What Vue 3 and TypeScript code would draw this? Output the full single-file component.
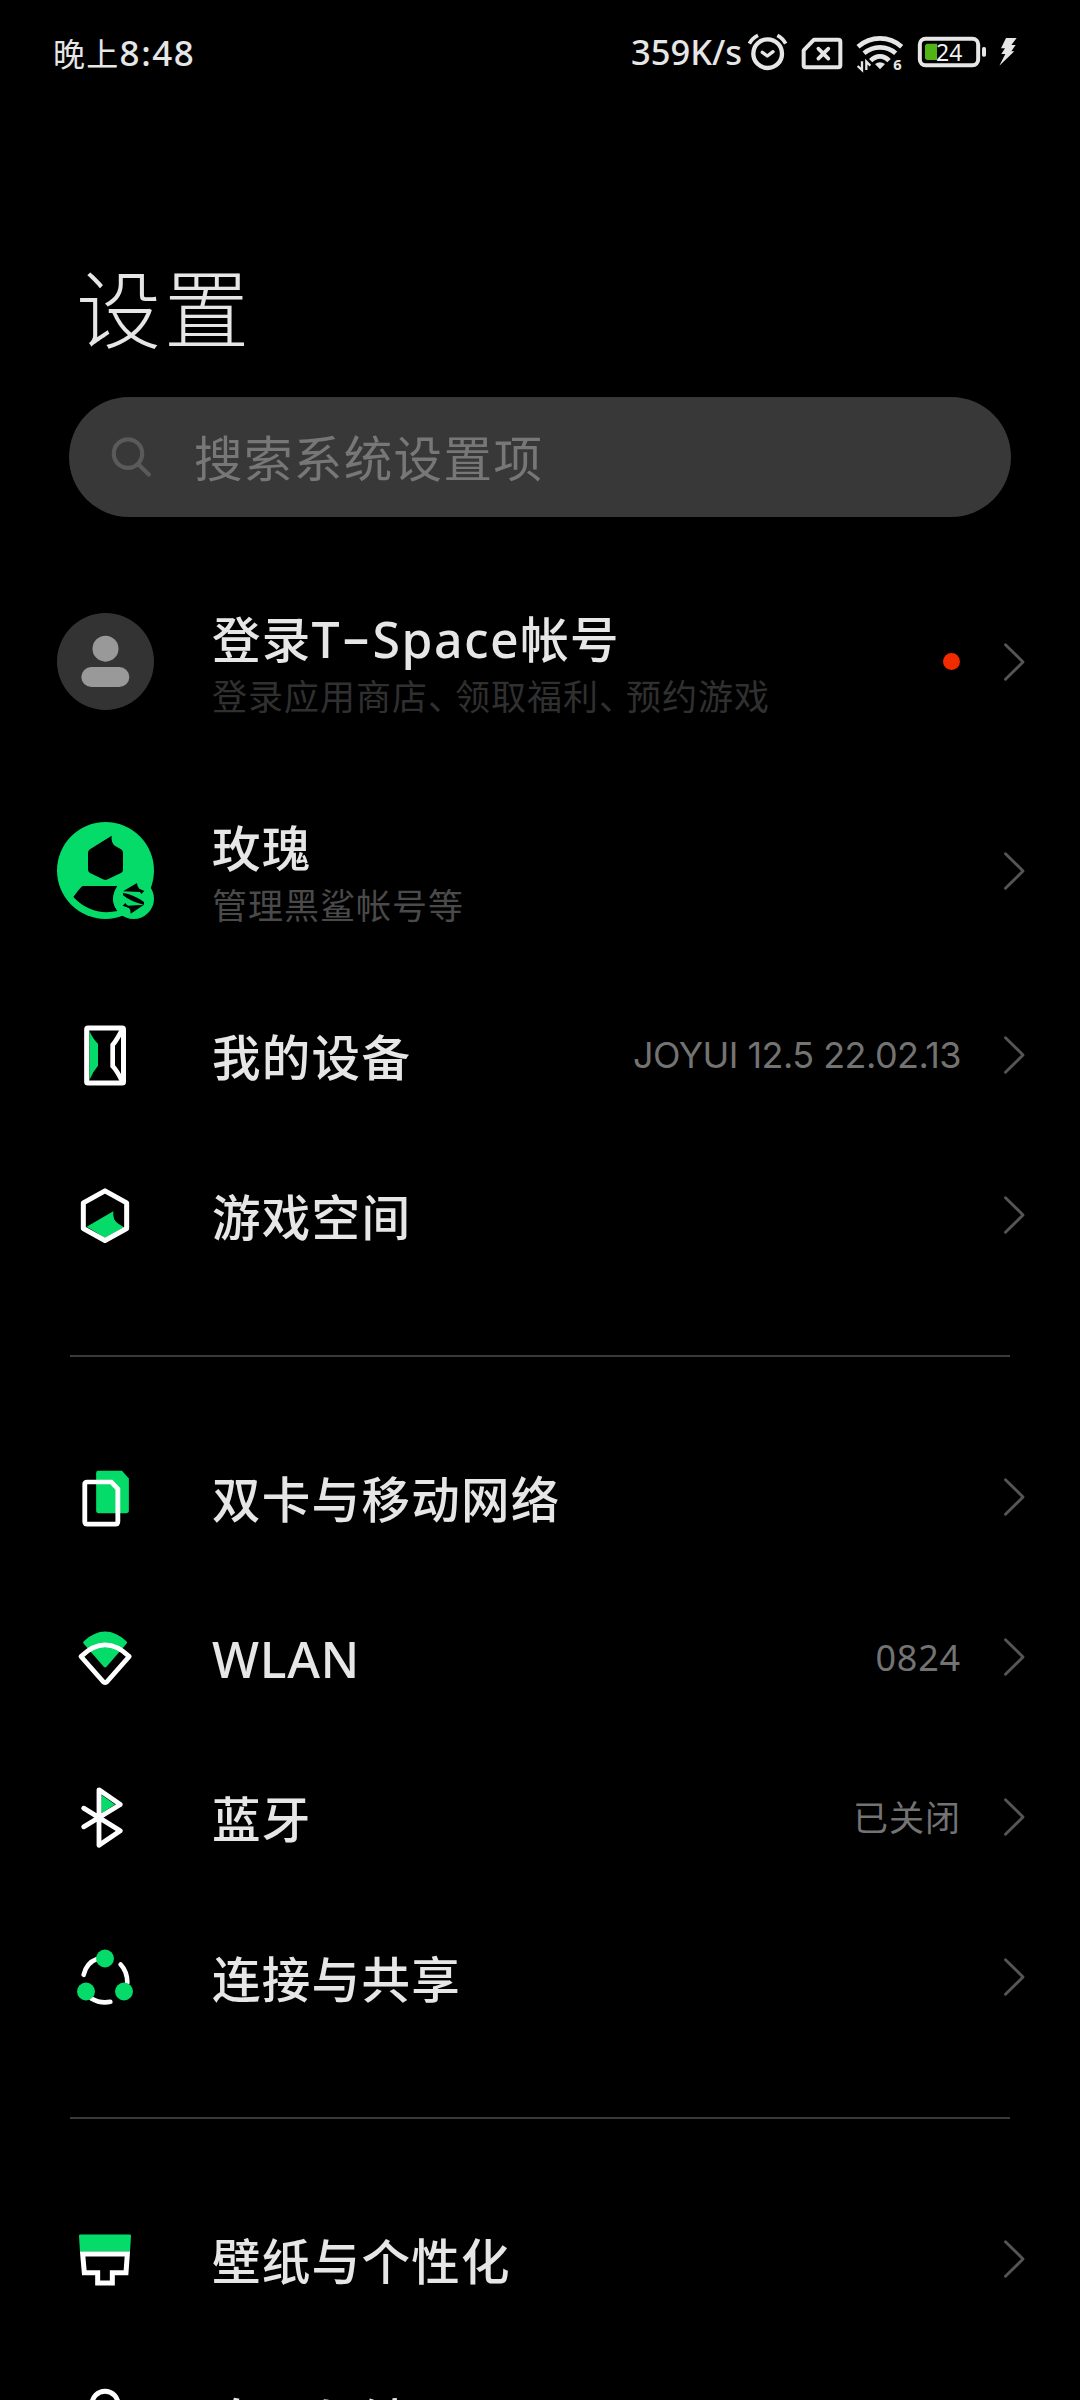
<script setup lang="ts">
interface Run {
  text: string
  kind?: 'latin' | 'latin dash' | 'latin word' | 'comma'
}

interface Row {
  icon: string
  box: string
  title: Run[]
  sub?: Run[]
  faint?: boolean
  value?: string
  valueKind?: 'cjk' | 'version'
  dot?: boolean
}

const sections: Row[][] = [
  [
    {
      icon: 'guest',
      box: '81 69 291 291',
      title: [
        { text: '登录' },
        { text: 'T', kind: 'latin' },
        { text: '-', kind: 'latin dash' },
        { text: 'Space', kind: 'latin word' },
        { text: '帐号' },
      ],
      sub: [
        { text: '登录应用商店' },
        { text: '、', kind: 'comma' },
        { text: '领取福利' },
        { text: '、', kind: 'comma' },
        { text: '预约游戏' },
      ],
      faint: true,
      dot: true,
    },
    { icon: 'account', box: '81 696 291 291', title: [{ text: '玫瑰' }], sub: [{ text: '管理黑鲨帐号等' }] },
    { icon: 'device', box: '21 19.5 291 291', title: [{ text: '我的设备' }], value: 'JOYUI 12.5 22.02.13', valueKind: 'version' },
    { icon: 'game', box: '21 499.5 291 291', title: [{ text: '游戏空间' }] },
  ],
  [
    { icon: 'sim', box: '20.3 25.5 281.7 291', title: [{ text: '双卡与移动网络' }] },
    { icon: 'wlan', box: '20.3 505.5 281.7 291', title: [{ text: 'WLAN', kind: 'latin' }], value: '0824' },
    { icon: 'bluetooth', box: '21 25.5 291 291', title: [{ text: '蓝牙' }], value: '已关闭', valueKind: 'cjk' },
    { icon: 'share', box: '21 505.5 291 291', title: [{ text: '连接与共享' }] },
  ],
  [
    { icon: 'brush', box: '21 361.5 291 291', title: [{ text: '壁纸与个性化' }] },
    { icon: 'lock', box: '21 841.5 291 291', title: [{ text: '息屏与锁屏' }] },
  ],
]
</script>

<template>
  <main class="screen">
    <header class="status">
      <div class="clock">晚上<span class="digits">8:48</span></div>
      <div class="indicators">
        <span class="speed">359K/s</span>
        <svg class="alarm" width="42" height="40" viewBox="441 66 126 120" fill="none" stroke="#e6e6e6" stroke-linecap="round">
          <circle cx="503" cy="131" r="43" stroke-width="13" />
          <path d="M487 127l15 11 17-13" stroke-width="10" stroke-linejoin="round" />
          <path d="M448 101q8-16 26-25M532 76q17 9 25 25" stroke-width="11" stroke-linecap="butt" />
        </svg>
        <svg class="simx" width="44" height="40" viewBox="600 66 132 120" fill="none" stroke="#e6e6e6">
          <path d="M642 89h73q6 0 6 6v71q0 6-6 6h-98q-6 0-6-6v-45z" stroke-width="12" stroke-linejoin="round" />
          <path d="M655 116l30 30M685 116l-30 30" stroke-width="11" stroke-linecap="round" />
        </svg>
        <svg class="wifi" width="50" height="40" viewBox="765 66 150 120" fill="none" stroke="#e6e6e6">
          <path d="M774 110q29-25 66-25t65 25" stroke-width="14" />
          <path d="M792 130q21-18 48-18t47 18" stroke-width="14" />
          <path d="M812 152q13-13 28-13t27 13" stroke-width="14" />
          <path d="M825 162q15-11 30 0l-15 16z" fill="#e6e6e6" stroke="none" />
          <path d="M786 154v26l-13-12M799 180v-25l12 12" stroke-width="7" />
          <text x="880" y="180" font-size="44" font-weight="700" fill="#e6e6e6" stroke="none">6</text>
        </svg>
        <svg class="battery" width="70" height="40" viewBox="951 66 210 120">
          <rect x="959.5" y="86.5" width="175" height="79" rx="17" fill="none" stroke="#e6e6e6" stroke-width="12" />
          <path d="M983 101h28v49h-28q-8 0-8-8v-33q0-8 8-8z" fill="#51b315" />
          <rect x="1146" y="111" width="12" height="29" rx="5" fill="#e6e6e6" />
          <text x="1008" y="153" font-size="69" fill="#f0f0f0">24</text>
        </svg>
        <svg class="bolt" width="20" height="40" viewBox="1194 66 60 120">
          <path d="M1218 84h32l-16 21h13l-13 19h9l-45 43 18-35h-12l11-17h-12z" fill="#e6e6e6" />
        </svg>
      </div>
    </header>

    <h1 class="heading">设置</h1>

    <div class="search">
      <svg width="44" height="44" viewBox="0 0 44 44" fill="none" stroke="#5a5a5a" stroke-width="4.2">
        <circle cx="18" cy="18.6" r="14.2" />
        <path d="M28.5 29.5l10.3 10" stroke-linecap="round" />
      </svg>
      <span>搜索系统设置项</span>
    </div>

    <section v-for="(rows, s) in sections" :key="s" class="group">
      <div v-for="row in rows" :key="row.icon" class="row" :class="{ tall: row.sub }">
        <svg class="icon" width="97" height="97" :viewBox="row.box" preserveAspectRatio="none" fill="none">
          <g v-if="row.icon === 'guest'">
            <circle cx="226.5" cy="214.5" r="145.5" fill="#333" />
            <circle cx="226.5" cy="176" r="39" fill="#999" />
            <rect x="154" y="231" width="144" height="60" rx="30" fill="#999" />
          </g>
          <g v-else-if="row.icon === 'account'">
            <circle cx="226.5" cy="841.5" r="145.5" fill="#04db68" />
            <path d="M245 737q-3 22 12 32l16 9q6 4 6 10v52q0 6-6 9l-40 19q-7 3-14 0l-39-19q-6-4-6-10v-51q0-6 6-10z" fill="#000" />
            <path d="M160 888h102q-12 18-13 39 0 20 14 36-78 16-133-42 13-19 24-30 3-3 6-3z" fill="#000" />
            <circle cx="311" cy="926" r="61" fill="#04db68" />
            <path d="M279 904l42-25q0 12 7 17l15 7-9 9-4-6zM279 909q31 4 63 27v8q-37-7-63-28zM278 947l8-8q3 6 9 8l47-3-40 27q1-12-5-17z" fill="#000" />
          </g>
          <g v-else-if="row.icon === 'device'">
            <path d="M118 91q11 25 26 39v66q-15 17-26 43z" fill="#04db68" />
            <rect x="110" y="82.5" width="110.5" height="165" rx="4" stroke="#fff" stroke-width="15" />
            <path d="M217 86q-17 34-29 47v64q12 12 29 46" stroke="#fff" stroke-width="14" />
          </g>
          <g v-else-if="row.icon === 'game'">
            <path d="M110 679l80-47q-3 25 14 37l18 11-57 32z" fill="#04db68" />
            <path d="M165 571l65 36v77l-65 36-65-36v-77z" stroke="#fff" stroke-width="15" stroke-linejoin="round" />
          </g>
          <g v-else-if="row.icon === 'sim'">
            <path d="M140 91h69l20 23v96q0 8-8 8h-79q-8 0-8-8V98q0-7 6-7z" fill="#04db68" />
            <path d="M108 124.5h70l19 21V244q0 7-7 7h-82q-7 0-7-7V131q0-6.5 7-6.5z" stroke="#fff" stroke-width="14" />
          </g>
          <g v-else-if="row.icon === 'wlan'">
            <path d="M98 602q62-58 124 0 4 3 0 8l-58 69q-4 4-8 0l-58-69q-4-5 0-8z" fill="#04db68" />
            <path d="M90 648q70-70 140 0l-66 77q-4 3-8 0z" stroke="#fff" stroke-width="14" stroke-linejoin="round" />
          </g>
          <g v-else-if="row.icon === 'bluetooth'">
            <path d="M154 103l41 29-41 26z" fill="#04db68" />
            <path d="M101 143l110 68-64 43V88l64 44-110 67" stroke="#fff" stroke-width="14.5" stroke-linecap="round" stroke-linejoin="round" />
          </g>
          <g v-else-if="row.icon === 'share'">
            <path d="M101 643q8-36 39-47M212 612q20 21 20 55M124 714q27 16 57 10" stroke="#fff" stroke-width="14" stroke-linecap="round" />
            <g fill="#04db68">
              <circle cx="165" cy="594" r="27" />
              <circle cx="108" cy="693" r="27" />
              <circle cx="222" cy="693" r="27" />
            </g>
          </g>
          <g v-else-if="row.icon === 'brush'">
            <path d="M91 432h148q4 0 4 4l-3 48H90l-3-48q0-4 4-4z" fill="#04db68" />
            <path d="M98 490.5h134l-4 56h-41v31h-44v-31h-40z" stroke="#fff" stroke-width="15" />
          </g>
          <g v-else>
            <path d="M126 968v-27a39 39 0 0 1 78 0v27" stroke="#fff" stroke-width="15" />
            <rect x="101" y="968" width="128" height="100" rx="8" stroke="#fff" stroke-width="15" />
          </g>
        </svg>

        <div class="labels">
          <div class="title">
            <span v-for="(run, i) in row.title" :key="i" :class="run.kind">{{ run.text }}</span>
          </div>
          <div v-if="row.sub" class="sub" :class="{ faint: row.faint }">
            <span v-for="(run, i) in row.sub" :key="i" :class="run.kind">{{ run.text }}</span>
          </div>
        </div>

        <span v-if="row.value" class="value" :class="row.valueKind">{{ row.value }}</span>
        <i v-if="row.dot" class="dot"></i>
        <svg class="chevron" width="22" height="38" viewBox="0 0 22 38" fill="none" stroke="#555" stroke-width="2.9" stroke-linecap="round" stroke-linejoin="round">
          <path d="M2.5 1.7L20 19 2.5 36.3" />
        </svg>
      </div>
    </section>
  </main>
</template>

<style>
html,
body {
  margin: 0;
  background: #000;
  overflow: hidden;
}
</style>

<style scoped>
.screen {
  width: 1080px;
  height: 2400px;
  overflow: hidden;
  background: #000;
  color: #e6e6e6;
  font-family: 'Noto Sans CJK SC', sans-serif;
  white-space: nowrap;
}

.status {
  display: flex;
  justify-content: space-between;
  height: 40px;
  padding: 32px 62px 0 53px;
  line-height: 40px;
}

.status svg {
  overflow: visible;
}

.clock {
  font-size: 32px;
  letter-spacing: 1.3px;
}

.digits,
.speed,
.status text {
  font-family: 'Noto Sans', sans-serif;
}

.digits {
  font-size: 35px;
  font-weight: 500;
  letter-spacing: 1.5px;
}

.indicators {
  display: flex;
}

.speed {
  margin-right: 5px;
  font-size: 34.5px;
  font-weight: 500;
}

.simx,
.wifi,
.bolt {
  margin-left: 11px;
}

.battery {
  margin-left: 12px;
}

.heading {
  height: 120px;
  margin: 173px 0 0 76px;
  font-size: 85px;
  font-weight: 300;
  line-height: 120px;
  letter-spacing: 3px;
}

.search {
  display: flex;
  align-items: center;
  box-sizing: border-box;
  width: 942px;
  height: 120px;
  margin: 32px 0 40px 69px;
  padding-left: 41px;
  border-radius: 60px;
  background: #383838;
  color: #777;
  font-size: 48.5px;
  letter-spacing: 1.4px;
}

.search span {
  margin: 0 0 2px 40px;
}

.group + .group {
  padding-top: 60px;
  margin-top: 60px;
  background: linear-gradient(#3a3a3a, #3a3a3a) 70px 0 / 940px 2px no-repeat;
}

.group + .group .row:first-child {
  margin-top: 2px;
}

.row {
  display: flex;
  align-items: center;
  height: 160px;
  padding: 0 55px 0 57px;
}

.row.tall {
  height: 209px;
}

.icon {
  flex: none;
}

.labels {
  flex: 1;
  margin: 0 0 0 58px;
}

.tall .labels {
  margin-top: 3px;
}

.title {
  height: 60px;
  font-size: 48.5px;
  font-weight: 500;
  line-height: 60px;
  letter-spacing: 1.3px;
}

.title .latin {
  font-family: 'Noto Sans', sans-serif;
  font-size: 50px;
  letter-spacing: 0.7px;
}

.title .word {
  letter-spacing: 1.5px;
}

.title .dash {
  display: inline-block;
  width: 32px;
  line-height: 56px;
  text-align: center;
  letter-spacing: 0;
  transform: translateY(-3px) scaleX(1.8);
}

.sub {
  height: 50px;
  padding-top: 2px;
  color: #4a4a4a;
  font-size: 35px;
  line-height: 52px;
  letter-spacing: 1px;
}

.sub.faint {
  color: #303030;
}

.sub .comma {
  letter-spacing: -8px;
}

.value {
  margin-right: 42px;
  color: #737373;
  font-family: 'Noto Sans', sans-serif;
  font-size: 36px;
  letter-spacing: 0.8px;
}

.value.version {
  font-family: Inter, sans-serif;
  letter-spacing: -0.55px;
}

.value.cjk {
  margin-top: -4px;
  font-family: 'Noto Sans CJK SC', sans-serif;
  font-size: 35px;
  letter-spacing: 1px;
}

.dot {
  width: 17px;
  height: 17px;
  margin-right: 43px;
  border-radius: 50%;
  background: #f22a00;
}

.chevron {
  flex: none;
}
</style>
